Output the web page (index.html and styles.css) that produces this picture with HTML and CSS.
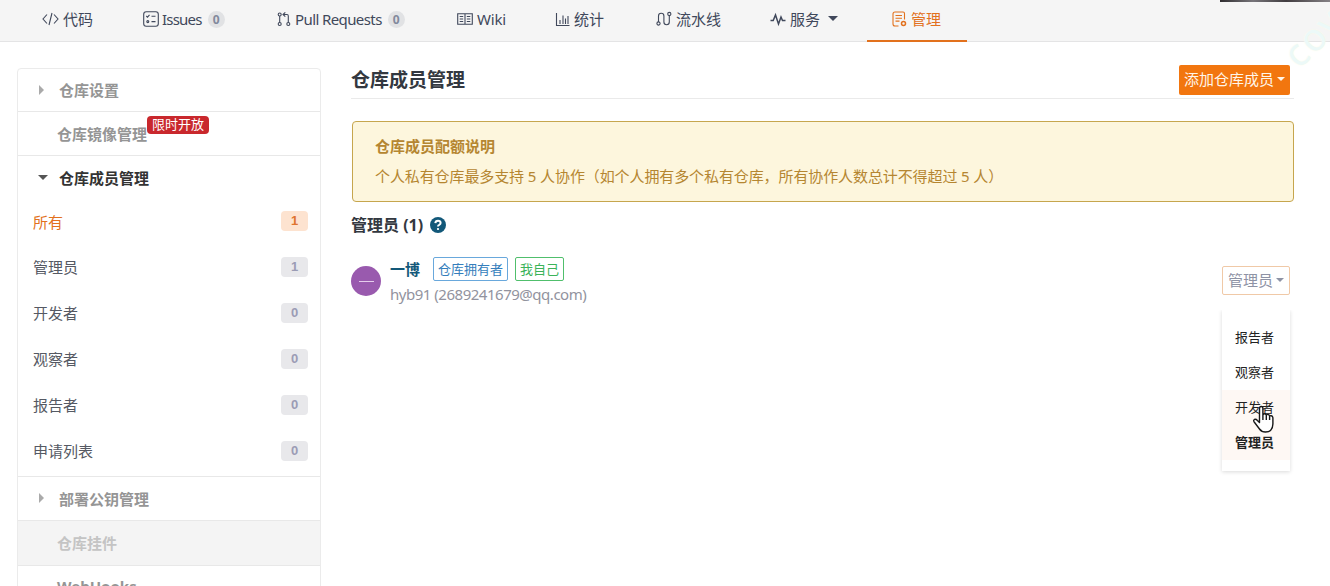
FILE: index.html
```html
<!DOCTYPE html>
<html lang="zh-CN">
<head>
<meta charset="utf-8">
<title>仓库成员管理</title>
<link rel="stylesheet" href="styles.css">
</head>
<body>
<nav class="nav">
  <a class="tab tab-code"><svg class="ico" width="17" height="16" viewBox="0 0 17 16"><path d="M5 3.500 1 8l4 4.500M12 3.500 16 8l-4 4.500M10 2 7 14"/></svg><span class="tab-text">代码</span></a>
  <a class="tab tab-issues"><svg class="ico" width="16" height="16" viewBox="0 0 16 16"><rect x=".7" y=".7" width="14.600" height="14.600" rx="2.500"/><path d="m3.300 5 1.200 1.200 2-2.300M8.500 5.300h4M8.500 10.600h4"/><circle cx="4.800" cy="10.600" r="1"/></svg><span class="tab-text issues-text">Issues</span><span class="count">0</span></a>
  <a class="tab tab-pulls"><svg class="ico" width="14" height="16" viewBox="0 0 14 16"><circle cx="2.700" cy="3.500" r="1.500"/><circle cx="2.700" cy="13" r="1.500"/><circle cx="11.300" cy="13" r="1.500"/><path d="M2.700 5v6.500M6 3.500h4q1.300 0 1.300 1.500v6.500M8.300 1.300 6 3.500l2.300 2.200"/></svg><span class="tab-text pulls-text">Pull Requests</span><span class="count">0</span></a>
  <a class="tab tab-wiki"><svg class="ico" width="16" height="16" viewBox="0 0 16 16"><path d="M.7 2.700h14.600v10.600H.7zM8 2.700v10.600M2.700 5.500h3.500M2.700 8h3.500M2.700 10.500h3.500M9.800 5.500h3.500M9.800 8h3.500M9.800 10.500h3.500"/></svg><span class="tab-text wiki-text">Wiki</span></a>
  <a class="tab tab-stats"><svg class="ico" width="15" height="16" viewBox="0 0 15 16"><path d="M1.500 2v12.500H14.500M5 13V9M8 13V4.500M10.500 13V7.500M13 13V5"/></svg><span class="tab-text">统计</span></a>
  <a class="tab tab-pipe"><svg class="ico" width="16" height="16" viewBox="0 0 16 16"><circle cx="2.500" cy="12.500" r="1.600"/><circle cx="13.300" cy="3" r="1.600"/><path d="M2.500 10.900V5a2.700 2.700 0 0 1 5.400 0v6a2.700 2.700 0 0 0 5.400 0V4.600"/></svg><span class="tab-text">流水线</span></a>
  <a class="tab tab-service"><svg class="ico" width="16" height="16" viewBox="0 0 16 16"><path class="bold" d="M.5 9.500h2.700L5.500 4 8.500 13 11 6l1.500 3.500h3"/></svg><span class="tab-text">服务</span><i class="caret nav-caret"></i></a>
  <a class="tab tab-manage"><svg class="ico" width="15" height="16" viewBox="0 0 15 16"><path d="M6.500 15H3Q1 15 1 13V3q0-2 2-2h8q1.500 0 1.500 1.500V8.500M3.500 4.500h6.500M3.500 7.300h6.500M3.500 10.100h4"/><circle class="bold" cx="11.500" cy="12.500" r="2"/></svg><span class="tab-text">管理</span></a>
</nav>
<div class="strip"></div>
<div class="watermark">cov</div>
<main class="layout">
  <aside class="menu">
    <div class="row settings"><i class="arrow"></i><b>仓库设置</b></div>
    <div class="row mirror"><b>仓库镜像管理</b><span class="hot">限时开放</span></div>
    <div class="group">
      <div class="row members"><i class="caret"></i><b>仓库成员管理</b></div>
      <div class="sub active"><span>所有</span><em>1</em></div>
      <div class="sub"><span>管理员</span><em>1</em></div>
      <div class="sub"><span>开发者</span><em>0</em></div>
      <div class="sub"><span>观察者</span><em>0</em></div>
      <div class="sub"><span>报告者</span><em>0</em></div>
      <div class="sub"><span>申请列表</span><em>0</em></div>
    </div>
    <div class="row keys"><i class="arrow"></i><b>部署公钥管理</b></div>
    <div class="row widget"><b>仓库挂件</b></div>
    <div class="row hooks"><b>WebHooks</b></div>
  </aside>
  <section class="content">
    <header class="head"><h1>仓库成员管理</h1><button class="add"><span>添加仓库成员</span><i class="caret"></i></button></header>
    <div class="notice"><b>仓库成员配额说明</b><p>个人私有仓库最多支持 5 人协作（如个人拥有多个私有仓库，所有协作人数总计不得超过 5 人）</p></div>
    <h2>管理员 (1)<svg class="help" width="16" height="16" viewBox="0 0 16 16"><circle cx="8" cy="8" r="8"/><path d="M5.300 6.200q.2-2.500 2.700-2.500t2.600 2.200q0 1.200-1.400 1.900Q8 8.300 8 9.600"/><rect x="6.900" y="10.900" width="2.200" height="2.200" rx="1"/></svg></h2>
    <div class="member">
      <div class="avatar"><span></span></div>
      <div class="info">
        <div class="name"><b>一博</b><span class="label owner">仓库拥有者</span><span class="label me">我自己</span></div>
        <div class="mail">hyb91 (2689241679@qq.com)</div>
      </div>
      <div class="role">
        <div class="role-button">管理员<i class="caret"></i></div>
        <div class="dropdown"><div>报告者</div><div>观察者</div><div class="hover">开发者</div><div class="chosen">管理员</div></div>
      </div>
    </div>
  </section>
</main>
<svg class="cursor" width="24" height="30" viewBox="0 0 24 30"><path d="M7.500 17.500V3.500q0-2 1.700-2t1.700 2V10q.3-1.300 1.700-1.300T14.300 10.500q.3-1.200 1.700-1.100T17.600 11.500q.3-1 1.700-.8T20.900 12.800V19q0 4-2.400 6.500-1.500 1.500-5 1.500-4 0-6-3L2.200 17q-1.200-1.700.2-2.500 1.500-.7 3 1zM10.900 10v5M14.300 11v4M17.600 12v3"/></svg>
</body>
</html>
```
FILE: styles.css
```css
* { box-sizing: border-box; }
body {
  margin: 0;
  height: 586px;
  overflow: hidden;
  position: relative;
  background: #fff;
  color: #40485b;
  font: 15px/22px "Noto Sans", "Noto Sans CJK SC", sans-serif;
}
h1, h2, p { margin: 0; }
.nav { display: flex; height: 42px; background: #f5f5f5; border-bottom: 1px solid #e4e4e5; }
.tab { display: flex; align-items: center; height: 42px; padding: 0 0 5px 25px; white-space: nowrap; flex: none; }
.tab-code { width: 101px; margin-left: 17px; }
.tab-issues { width: 134px; }
.tab-pulls { width: 180px; }
.tab-wiki { width: 98px; }
.tab-stats { width: 101px; }
.tab-pipe { width: 114px; }
.tab-service { width: 97px; margin-right: 25px; }
.tab-manage { width: 100px; color: #e2711d; border-bottom: 2px solid #e2711d; padding-bottom: 3px; }
.tab-text { margin-left: 4px; }
.ico { fill: none; stroke: currentColor; stroke-width: 1.1; flex: none; }
.bold { stroke-width: 1.5; }
.issues-text { letter-spacing: -.8px; margin-left: 3px; }
.pulls-text { letter-spacing: -.6px; }
.wiki-text { letter-spacing: -.2px; }
.count { margin-left: 6px; width: 17px; height: 17px; border-radius: 9px; background: #e1e2e4; color: #82899c; font: bold 12px/17px "Noto Sans", sans-serif; text-align: center; position: relative; top: 1px; }
.caret { display: inline-block; border: 5px solid transparent; border-top-color: currentColor; border-bottom: 0; flex: none; }
.nav-caret { margin-left: 8px; }
.strip { position: absolute; right: 0; top: 0; width: 110px; height: 2px; background: linear-gradient(90deg, #302d30, #77757a 30%, #413d40 60%, #858185); }
.watermark { position: absolute; left: 1272px; top: 15px; width: 80px; text-align: center; font: 38px/42px "Noto Sans", sans-serif; letter-spacing: 2px; color: #ecf9f8; text-shadow: 0 0 2px #fbfbe6; transform: rotate(-45deg); }
.layout { display: flex; }
.menu { flex: none; width: 304px; margin: 26px 30px 0 17px; height: 530px; border: 1px solid #ebebeb; border-radius: 4px 4px 0 0; }
.row { display: flex; align-items: center; position: relative; padding-left: 40px; color: #959595; border-bottom: 1px solid #e8e8e8; }
.row .arrow, .row .caret { position: absolute; left: 21px; top: 16px; }
.row .caret { left: 20px; }
.arrow { border: 5px solid transparent; border-left-color: #aaa; border-right: 0; }
.settings { height: 43px; padding-left: 41px; }
.mirror { height: 44px; padding-left: 39px; }
.hot { align-self: flex-start; margin-top: 4px; padding: 0 5px; height: 18px; border-radius: 4px; background: #c9282d; color: #fff; font-size: 13px; line-height: 17px; width: 62px; white-space: nowrap; }
.group { height: 321px; border-bottom: 1px solid #e8e8e8; }
.members { height: 44px; padding-left: 41px; color: #333; border: 0; }
.members .caret { top: 19px; border-top-color: #555; }
.sub { display: flex; justify-content: space-between; align-items: center; height: 46px; padding: 0 12px 0 15px; color: #555963; }
.sub em { width: 27px; height: 20px; border-radius: 4px; background: #e8e8eb; color: #9b9cb5; font: bold 13px/20px "Liberation Sans", sans-serif; text-align: center; }
.sub.active { color: #e2711d; height: 44px; }
.active em { background: #fde3d0; color: #df742f; margin-bottom: 2px; }
.keys { height: 44px; padding-left: 41px; }
.widget { height: 45px; padding-left: 39px; background: #f4f4f4; color: #c4c4c4; }
.hooks { height: 39px; padding-left: 39px; border: 0; }
.content { width: 943px; padding-top: 22px; }
.head { display: flex; justify-content: space-between; height: 35px; border-bottom: 1px solid #eaeaea; padding-right: 4px; }
h1 { font-size: 19px; line-height: 32px; color: #333840; }
.add { display: flex; align-items: center; height: 30px; margin-top: 1px; border: 0; border-radius: 2px; background: #f2760f; color: #fff5e9; font: inherit; width: 111px; padding: 0 5px 2px; white-space: nowrap; justify-content: space-between; }
.add .caret, .role-button .caret { border-width: 4px 4px 0; }
.notice { height: 81px; margin: 22px 0 0 1px; padding: 13px 22px; border: 1px solid #c6a64e; border-radius: 4px; background: #fdf6dd; color: #b58631; }
.notice p { margin-top: 8px; white-space: nowrap; letter-spacing: -.1px; }
h2 { display: flex; align-items: center; height: 24px; margin-top: 11px; font-size: 16px; color: #333840; }
.help { margin-left: 7px; fill: #125879; }
.help path { fill: none; stroke: #fff; stroke-width: 2; }
.help rect { fill: #fff; }
.member { display: flex; height: 56px; margin-top: 19px; position: relative; }
.avatar { width: 30px; height: 30px; border-radius: 50%; background: #995aae; margin: 10px 9px 0 0; display: flex; align-items: center; justify-content: center; }
.avatar span { width: 15px; height: 1px; background: #e5cdec; }
.info { margin-top: -1px; }
.name { display: flex; align-items: center; height: 28px; color: #125879; }
.label { display: flex; align-items: center; justify-content: center; height: 24px; border: 1px solid #69a8dc; border-radius: 2px; color: #347ebc; font-size: 13px; }
.owner { width: 75px; margin: 0 7px 0 13px; }
.me { width: 49px; color: #3bb359; border-color: #50bf6c; }
.mail { color: #92939e; letter-spacing: -.48px; line-height: 22px; }
.role { margin-left: auto; margin-right: 4px; width: 68px; padding-top: 10px; }
.role-button { display: flex; align-items: center; justify-content: space-between; height: 29px; border: 1px solid #f0c9a7; border-radius: 2px; padding: 0 5px 2px; color: #8e93a5; white-space: nowrap; }
.dropdown { position: absolute; right: 4px; top: 54px; width: 68px; height: 161px; background: #fff; box-shadow: 0 1px 4px rgba(0,0,0,.15); clip-path: inset(0 -5px -6px -5px); padding-top: 10px; color: #222; font-size: 13px; text-align: center; line-height: 35px; }
.dropdown div { height: 35px; padding-right: 3px; }
.dropdown .hover, .dropdown .chosen { background: #fef8f4; }
.dropdown .chosen { font-weight: bold; }
.cursor { position: absolute; left: 1252px; top: 405px; fill: #fff; stroke: #171717; stroke-width: 1.4; stroke-linejoin: round; }
```
